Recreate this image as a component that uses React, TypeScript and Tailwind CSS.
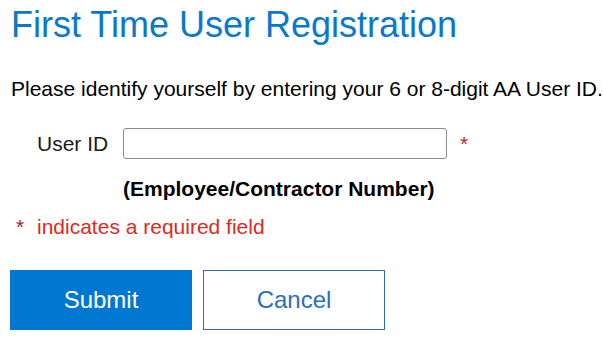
export default function App() {
  return (
    <div className="min-h-[340px] bg-white px-[11px] pt-[4px] font-['Liberation_Sans',Arial,sans-serif] text-[#111]">
      <h1 className="text-[36px] leading-[42px] font-normal text-[#0a78cc]">First Time User Registration</h1>

      <p className="mt-[31px] whitespace-nowrap text-[21px] leading-[24px] text-black">
        Please identify yourself by entering your 6 or 8-digit AA User ID.
      </p>

      <div className="mt-[27px] flex items-center pl-[26px]">
        <label htmlFor="userId" className="w-[86px] text-[21px] leading-[24px] text-[#1a1a1a]">
          User ID
        </label>
        <input
          id="userId"
          type="text"
          className="h-[31px] w-[324px] rounded-[3px] border border-[#8c8c8c] bg-white px-2 text-[18px] outline-none"
        />
        <span className="ml-[13px] text-[21px] leading-[24px] text-[#c0282d]">*</span>
      </div>

      <div className="mt-[18px] pl-[112px] text-[21px] leading-[24px] font-bold text-black">
        (Employee/Contractor Number)
      </div>

      <div className="mt-[14px] flex pl-[5px] text-[21px] leading-[24px]">
        <span className="w-[21px] text-[#b8202a]">*</span>
        <span className="text-[#dc2a22]">indicates a required field</span>
      </div>

      <div className="mt-[31px] flex gap-[11px]">
        <button type="button" className="-ml-px h-[60px] w-[182px] bg-[#0078d2] text-[24px] text-white">
          Submit
        </button>
        <button
          type="button"
          className="h-[60px] w-[182px] border border-[#2a6ebb] bg-white text-[24px] text-[#2a6ebb]"
        >
          Cancel
        </button>
      </div>
    </div>
  )
}
